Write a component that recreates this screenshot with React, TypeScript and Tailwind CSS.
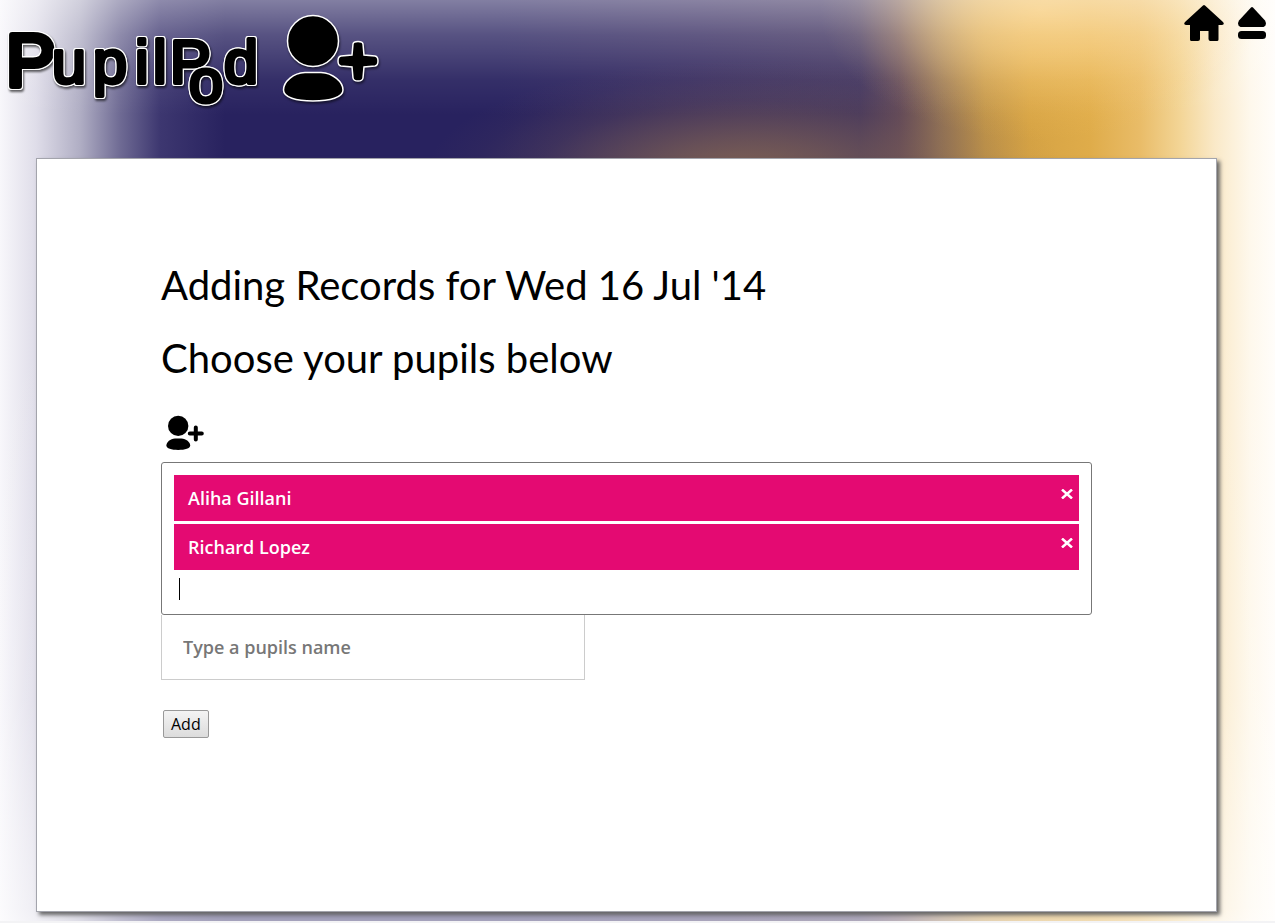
import { useState } from "react";

function UserPlus({ className, outlined = false }: { className: string; outlined?: boolean }) {
  return (
    <svg viewBox="0 0 100 92" className={className} aria-hidden="true" overflow="visible">
      <g fill="#000" stroke={outlined ? "#fff" : "none"} strokeWidth="1.5">
        <circle cx="33" cy="27" r="25.5" />
        <path d="M25 58.500 H41 C53 59 63 68 63 76 C63 83.500 50 87 33 87 C16 87 3.500 83.500 3.500 76 C3.500 68 13 59 25 58.500 Z" />
        {outlined ? (
          <path d="M73 30 Q73.500 27.500 78 27.500 Q82.500 27.500 83 30 L84 41 L95 42 Q98 42.500 98 47 Q98 51.500 95 52 L84 53 L83 64 Q82.500 67 78 67 Q73.500 67 73 64 L72 53 L61 52 Q58 51.500 58 47 Q58 42.500 61 42 L72 41 Z" />
        ) : (
          <path d="M77 31 V61 M62 46 H92" stroke="#000" strokeWidth="10" strokeLinecap="round" />
        )}
      </g>
    </svg>
  );
}

const logoLetters = [
  { t: "P", x: 6, y: 86, size: 74, stroke: 6 },
  { t: "u", x: 52, y: 83, size: 61, stroke: 4 },
  { t: "p", x: 93, y: 83, size: 61, stroke: 4 },
  { t: "i", x: 135, y: 83, size: 61, stroke: 4 },
  { t: "l", x: 153, y: 83, size: 61, stroke: 4 },
  { t: "P", x: 170, y: 83, size: 61, stroke: 4 },
  { t: "o", x: 189, y: 102, size: 61, stroke: 4 },
  { t: "d", x: 224, y: 83, size: 61, stroke: 4 },
];

function Wordmark() {
  return (
    <svg viewBox="0 0 266 112" className="h-28 w-[266px] shrink-0 drop-shadow-[1px_2px_1px_rgba(0,0,0,0.6)]" role="img" aria-label="PupilPod">
      {logoLetters.map((l, i) => (
        <text
          key={i}
          x={l.x}
          y={l.y}
          fontSize={l.size}
          strokeWidth={l.stroke}
          strokeLinejoin="round"
          className="fill-black stroke-black font-['Liberation_Sans',sans-serif] [filter:drop-shadow(1px_0_#fff)_drop-shadow(-1px_0_#fff)_drop-shadow(0_1px_#fff)_drop-shadow(0_-1px_#fff)]"
        >
          {l.t}
        </text>
      ))}
    </svg>
  );
}

function Backdrop() {
  return (
    <div className="absolute inset-0 -z-10 overflow-hidden bg-white" aria-hidden="true">
      <div className="absolute inset-0 bg-[linear-gradient(90deg,#f8f7fb_0px,#dfdde9_36px,#b0aec4_80px,#6f6b94_120px,#3d3770_160px,#28225f_225px,#28225f_500px,#34295f_700px,#3f325e_860px,#5e4659_900px,#8f7056_940px,#bf9349_985px,#d6a344_1030px,#dfac4a_1090px,#e9bc68_1140px,#f3d596_1180px,#fae9c8_1215px,#fef8ec_1250px,#fffdfa_1275px)]" />
      <div className="absolute inset-0 bg-[radial-gradient(ellipse_320px_115px_at_745px_175px,rgba(138,106,82,0.9)_0%,rgba(138,106,82,0.6)_30%,rgba(138,106,82,0.2)_65%,rgba(138,106,82,0.06)_85%,transparent_100%)]" />
      <div className="absolute inset-0 bg-[radial-gradient(ellipse_220px_130px_at_1040px_10px,rgba(250,200,105,0.85)_0%,rgba(250,200,105,0.6)_35%,rgba(250,200,105,0.2)_70%,rgba(250,200,105,0.06)_88%,transparent_100%)]" />
      <div className="absolute inset-0 bg-[linear-gradient(180deg,rgba(255,255,255,0.42)_0px,rgba(255,255,255,0.22)_35px,rgba(255,255,255,0.06)_80px,transparent_115px,transparent_300px,rgba(255,255,255,0.1)_700px,rgba(255,255,255,0.5)_910px,rgba(255,255,255,0.6)_923px)]" />
      <div className="absolute inset-x-0 bottom-0 h-0.5 bg-[#f3f3f5]" />
    </div>
  );
}

export default function App() {
  const [pupils, setPupils] = useState(["Aliha Gillani", "Richard Lopez"]);
  return (
    <div className="relative isolate min-h-screen pb-[11px] font-['Open_Sans',sans-serif] text-black">
      <Backdrop />
      <header className="flex h-[158px] items-start justify-between">
        <a href="#home" className="flex items-start">
          <Wordmark />
          <UserPlus outlined className="mt-3.5 ml-3.5 h-[92px] w-[100px] drop-shadow-[1px_2px_1px_rgba(0,0,0,0.5)]" />
        </a>
        <nav className="flex gap-3.5 pt-1 pr-[9px]">
          <a href="#home" aria-label="Home">
            <svg viewBox="0 0 40 38" className="h-[38px] w-10">
              <path d="M19 1.500 Q20 .5 21 1.500 L39 18 Q41 20.500 38 21 H34.500 V35.500 Q34.500 37 33 37 H26.500 Q24.500 37 24.500 35 V27 H16 V35 Q16 37 14 37 H7.500 Q6 37 6 35.500 V21 H2 Q-1 20.500 1 18 Z" />
            </svg>
          </a>
          <a href="#exit" aria-label="Sign out">
            <svg viewBox="0 0 28 38" className="h-[38px] w-7">
              <path d="M13 3.500 Q14 2.500 15 3.500 L27 16.500 Q29.500 21.500 25.500 23 H2.500 Q-1.500 21.500 1 16.500 Z" />
              <rect y="27" width="28" height="8" rx="3.500" />
            </svg>
          </a>
        </nav>
      </header>

      <main className="mr-[58px] ml-9 min-h-[754px] border border-[#a3a4ac] bg-white px-31 pt-[99px] shadow-[3px_3px_4px_#666]">
        <h1 className="font-[Lato,sans-serif] text-[40px] leading-[54px]">Adding Records for Wed 16 Jul '14</h1>
        <h2 className="mt-[19px] font-[Lato,sans-serif] text-[40px] leading-[54px]">Choose your pupils below</h2>
        <UserPlus className="mt-[30px] ml-1 block h-[37px] w-10" />
        <form onSubmit={(e) => e.preventDefault()}>
          <div className="mt-2.5 rounded-[3px] border border-[#777] px-3 pt-3 pb-2">
            <ul className="flex flex-col gap-[3px]">
              {pupils.map((name) => (
                <li key={name} className="flex h-[46px] items-start justify-between bg-[#e40a72] pr-1.5 pl-3.5 text-white">
                  <span className="text-lg leading-[46px] font-semibold">{name}</span>
                  <button
                    type="button"
                    aria-label={`Remove ${name}`}
                    onClick={() => setPupils(pupils.filter((p) => p !== name))}
                    className="mt-3.5"
                  >
                    <svg viewBox="0 0 12 10" className="h-2.5 w-3" stroke="#fff" strokeWidth="2.500">
                      <path d="M1 .5 L11 9.500 M11 .5 L1 9.500" />
                    </svg>
                  </button>
                </li>
              ))}
            </ul>
            <div className="mt-2 flex h-[28px] items-start pl-[5px]">
              <span className="h-[22px] w-px bg-black" />
              <input aria-label="Search pupils" className="h-[22px] flex-1 outline-none" />
            </div>
          </div>
          <input
            aria-label="Pupil name"
            placeholder="Type a pupils name"
            className="block h-[65px] w-[424px] border border-t-0 border-[#ccc] px-[21px] text-lg font-semibold outline-none placeholder:text-[#777]"
          />
          <button type="submit" className="mt-[30px] ml-0.5 h-7 rounded-[2px] border border-[#999] bg-linear-to-b from-[#f4f4f4] to-[#dcdcdc] px-[7px] text-base leading-[26px]">
            Add
          </button>
        </form>
      </main>
    </div>
  );
}
